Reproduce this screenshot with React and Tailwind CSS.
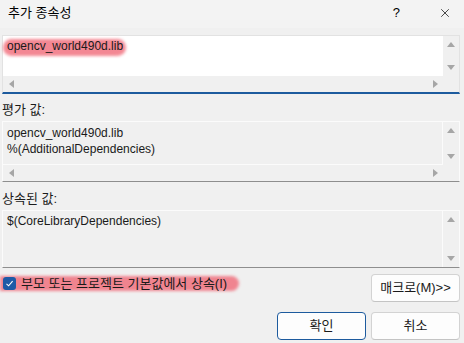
import { X } from "lucide-react";

const font = { fontFamily: '"Liberation Sans", "Noto Sans CJK KR", sans-serif' };

function Arrow({ dir }) {
  const paths = {
    up: "M0 5 L4 0 L8 5 Z",
    down: "M0 0 L8 0 L4 5 Z",
    left: "M5 0 L5 8 L0 4 Z",
    right: "M0 0 L5 4 L0 8 Z",
  };
  const horiz = dir === "left" || dir === "right";
  return (
    <svg width={horiz ? 5 : 8} height={horiz ? 8 : 5} viewBox={horiz ? "0 0 5 8" : "0 0 8 5"}>
      <path d={paths[dir]} fill="#a6a6a6" />
    </svg>
  );
}

function Highlight({ children, className }) {
  return (
    <span className="relative inline-block">
      <span className={`absolute rounded-full bg-[#f0606f] opacity-75 blur-[1.5px] ${className}`} />
      <span className="relative">{children}</span>
    </span>
  );
}

function ScrollBox({ children, hscroll, active, height, padTop = "pt-[3px]" }) {
  return (
    <div
      className={`flex flex-col ${height} ${
        active
          ? "border border-[#e2e2e2] border-b-2 border-b-[#1d5b9e] bg-[#f0f0f0]"
          : "border border-[#fbfbfb] border-b-[#8e8e8e] bg-[#f0f0f0]"
      }`}
    >
      <div className="flex flex-1 min-h-0">
        <div
          className={`flex-1 pl-[4px] ${padTop} text-[12px] leading-[16px] text-[#1a1a1a] ${
            active ? "bg-white" : "border-r border-[#fbfbfb] " + (hscroll ? "border-b" : "")
          }`}
        >
          {children}
        </div>
        <div className="w-[16px] flex flex-col items-center justify-between py-[6px]">
          <Arrow dir="up" />
          <Arrow dir="down" />
        </div>
      </div>
      {hscroll && (
        <div className="h-[16px] flex items-center justify-between pl-[6px] pr-[21px]">
          <Arrow dir="left" />
          <Arrow dir="right" />
        </div>
      )}
    </div>
  );
}

function Btn({ children, primary, className }) {
  return (
    <button
      className={`h-[28px] rounded-[4px] text-[13px] text-[#1a1a1a] bg-[#fdfdfd] ${
        primary ? "border border-[#1d5b9e]" : "border border-[#d3d3d3] border-b-[#c4c4c4]"
      } ${className}`}
    >
      {children}
    </button>
  );
}

export default function App() {
  return (
    <div className="w-[464px] h-[343px] bg-[#f0f0f0] flex flex-col overflow-hidden" style={font}>
      {/* title bar */}
      <div className="h-[28px] bg-[#f3f3f3] flex items-center pl-[8px] pr-[12px] text-[13px] text-black">
        <span className="pb-[3px]">추가 종속성</span>
        <span className="ml-auto mr-[38px] pb-[3px] text-[13px]">?</span>
        <X size={14} strokeWidth={1.2} className="mb-[3px]" />
      </div>

      <div className="flex flex-col pl-[2px] pr-[4px] pt-[7px] text-[12px] text-[#1a1a1a]">
        <ScrollBox active hscroll height="h-[59px]" padTop="pt-[2px]">
          <Highlight className="-left-[4px] -right-[3px] top-[1px] bottom-[-2px]">opencv_world490d.lib</Highlight>
        </ScrollBox>

        <div className="h-[27px] pt-[8px] leading-[15px] text-[13px]">평가 값:</div>
        <ScrollBox hscroll height="h-[61px]">
          <div>opencv_world490d.lib</div>
          <div>%(AdditionalDependencies)</div>
        </ScrollBox>

        <div className="h-[28px] pt-[9px] leading-[15px] text-[13px]">상속된 값:</div>
        <ScrollBox height="h-[58px]" padTop="pt-[2px]">
          <div>$(CoreLibraryDependencies)</div>
        </ScrollBox>

        <div className="mt-[6px] flex items-start">
          <div className="relative mt-[2px] -ml-[2px] flex items-center h-[15px] pl-[3px] pr-[12px]">
            <span className="absolute inset-0 rounded-r-full bg-[#f0606f] opacity-75 blur-[1.5px]" />
            <span className="relative w-[13px] h-[13px] rounded-[3px] bg-[#1d5aa6] flex items-center justify-center">
              <svg width="9" height="9" viewBox="0 0 9 9">
                <path d="M1.5 4.8 L3.6 6.8 L7.6 2.2" stroke="white" strokeWidth="1.1" fill="none" />
              </svg>
            </span>
            <span className="relative ml-[5px] leading-[15px] text-[13px]">부모 또는 프로젝트 기본값에서 상속(I)</span>
          </div>
          <Btn className="ml-auto w-[89px]">매크로(M)&gt;&gt;</Btn>
        </div>

        <div className="mt-[10px] flex justify-end gap-[5px]">
          <Btn primary className="w-[89px]">확인</Btn>
          <Btn className="w-[89px]">취소</Btn>
        </div>
      </div>
    </div>
  );
}
